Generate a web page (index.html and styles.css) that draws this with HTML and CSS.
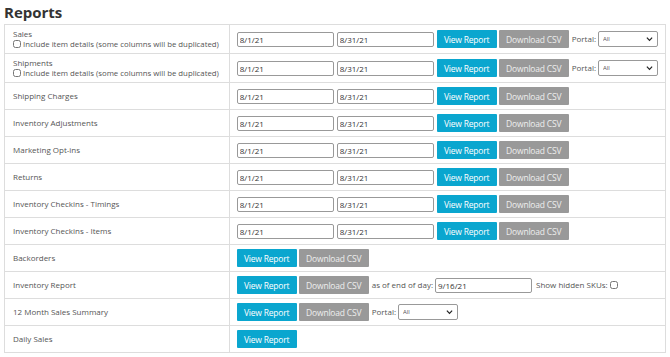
FILE: index.html
```html
<!DOCTYPE html>
<html lang="en">
<head>
    <meta charset="UTF-8">
    <title>Reports</title>
    <link rel="stylesheet" href="styles.css">
</head>
<body>
    <h1>Reports</h1>

    <table class="reports">
        <tr>
            <td class="name">Sales<label><input type="checkbox"> Include item details (some columns will be duplicated)</label></td>
            <td><div class="actions">
                <input class="date" type="text" value="8/1/21"><input class="date" type="text" value="8/31/21">
                <button class="view">View Report</button><button class="csv">Download CSV</button>
                <span class="lbl">Portal:</span>
                <span class="sel"><select><option>All</option></select><svg viewBox="0 0 8 6"><path d="M1 1.5l3 3 3-3" fill="none" stroke="#222" stroke-width="1.4"/></svg></span>
            </div></td>
        </tr>
        <tr>
            <td class="name">Shipments<label><input type="checkbox"> Include item details (some columns will be duplicated)</label></td>
            <td><div class="actions">
                <input class="date" type="text" value="8/1/21"><input class="date" type="text" value="8/31/21">
                <button class="view">View Report</button><button class="csv">Download CSV</button>
                <span class="lbl">Portal:</span>
                <span class="sel"><select><option>All</option></select><svg viewBox="0 0 8 6"><path d="M1 1.5l3 3 3-3" fill="none" stroke="#222" stroke-width="1.4"/></svg></span>
            </div></td>
        </tr>
        <tr>
            <td class="name">Shipping Charges</td>
            <td><div class="actions">
                <input class="date" type="text" value="8/1/21"><input class="date" type="text" value="8/31/21">
                <button class="view">View Report</button><button class="csv">Download CSV</button>
            </div></td>
        </tr>
        <tr>
            <td class="name">Inventory Adjustments</td>
            <td><div class="actions">
                <input class="date" type="text" value="8/1/21"><input class="date" type="text" value="8/31/21">
                <button class="view">View Report</button><button class="csv">Download CSV</button>
            </div></td>
        </tr>
        <tr>
            <td class="name">Marketing Opt-ins</td>
            <td><div class="actions">
                <input class="date" type="text" value="8/1/21"><input class="date" type="text" value="8/31/21">
                <button class="view">View Report</button><button class="csv">Download CSV</button>
            </div></td>
        </tr>
        <tr>
            <td class="name">Returns</td>
            <td><div class="actions">
                <input class="date" type="text" value="8/1/21"><input class="date" type="text" value="8/31/21">
                <button class="view">View Report</button><button class="csv">Download CSV</button>
            </div></td>
        </tr>
        <tr>
            <td class="name">Inventory Checkins - Timings</td>
            <td><div class="actions">
                <input class="date" type="text" value="8/1/21"><input class="date" type="text" value="8/31/21">
                <button class="view">View Report</button><button class="csv">Download CSV</button>
            </div></td>
        </tr>
        <tr>
            <td class="name">Inventory Checkins - Items</td>
            <td><div class="actions">
                <input class="date" type="text" value="8/1/21"><input class="date" type="text" value="8/31/21">
                <button class="view">View Report</button><button class="csv">Download CSV</button>
            </div></td>
        </tr>
        <tr>
            <td class="name">Backorders</td>
            <td><div class="actions">
                <button class="view">View Report</button><button class="csv">Download CSV</button>
            </div></td>
        </tr>
        <tr>
            <td class="name">Inventory Report</td>
            <td><div class="actions">
                <button class="view">View Report</button><button class="csv">Download CSV</button>
                <span class="lbl">as of end of day:</span><input class="date" type="text" value="9/16/21">
                <span class="lbl">Show hidden SKUs:</span><input type="checkbox">
            </div></td>
        </tr>
        <tr>
            <td class="name">12 Month Sales Summary</td>
            <td><div class="actions">
                <button class="view">View Report</button><button class="csv">Download CSV</button>
                <span class="lbl">Portal:</span>
                <span class="sel"><select><option>All</option></select><svg viewBox="0 0 8 6"><path d="M1 1.5l3 3 3-3" fill="none" stroke="#222" stroke-width="1.4"/></svg></span>
            </div></td>
        </tr>
        <tr>
            <td class="name">Daily Sales</td>
            <td><div class="actions">
                <button class="view">View Report</button>
            </div></td>
        </tr>
    </table>
</body>
</html>
```

FILE: styles.css
```css
body {
    margin: 0 4px;
    font-family: 'Open Sans', 'Liberation Sans', sans-serif;
    color: #555;
}
h1 {
    font-size: 15px;
    line-height: 24px;
    margin: 0;
    color: #333;
}
.reports {
    width: 662px;
    border-collapse: collapse;
}
.reports td {
    border: 1px solid #ddd;
    padding: 4px 7px;
    font-size: 8px;
    line-height: 10px;
    vertical-align: middle;
    white-space: nowrap;
}
.reports td.name {
    width: 209px;
    padding-left: 8px;
}
.reports label {
    display: block;
    height: 10px;
    font-size: 7.8px;
}
.reports label input {
    vertical-align: -1px;
}
input[type=checkbox] {
    width: 8px;
    height: 8px;
    margin: 0;
}
.actions {
    display: flex;
    align-items: center;
    gap: 2px;
    height: 18px;
}
.date {
    width: 97px;
    height: 15px;
    box-sizing: border-box;
    border: 1px solid #999;
    border-radius: 2px;
    padding: 0 2px;
    margin: 0 1px 0 0;
    font-family: 'Open Sans', sans-serif;
    font-size: 8px;
    color: #333;
}
button {
    height: 18px;
    border: none;
    border-radius: 1px;
    padding: 0;
    font-family: 'Open Sans', sans-serif;
    font-size: 8.5px;
    letter-spacing: -0.2px;
    cursor: pointer;
}
.view {
    width: 60px;
    background-color: #0aa6cf;
    color: #fff;
}
.csv {
    width: 70px;
    background-color: #999;
    color: #eee;
}
.lbl {
    margin-left: 1px;
}
.sel {
    position: relative;
    display: inline-block;
    height: 16px;
}
.sel select {
    appearance: none;
    width: 60px;
    height: 16px;
    padding: 0 4px;
    font-family: 'Open Sans', sans-serif;
    font-size: 6px;
    border: 1px solid #999;
    border-radius: 2px;
    background: #fff;
    color: #555;
}
.sel svg {
    position: absolute;
    right: 5px;
    top: 5px;
    width: 7px;
    height: 6px;
    pointer-events: none;
}
```
